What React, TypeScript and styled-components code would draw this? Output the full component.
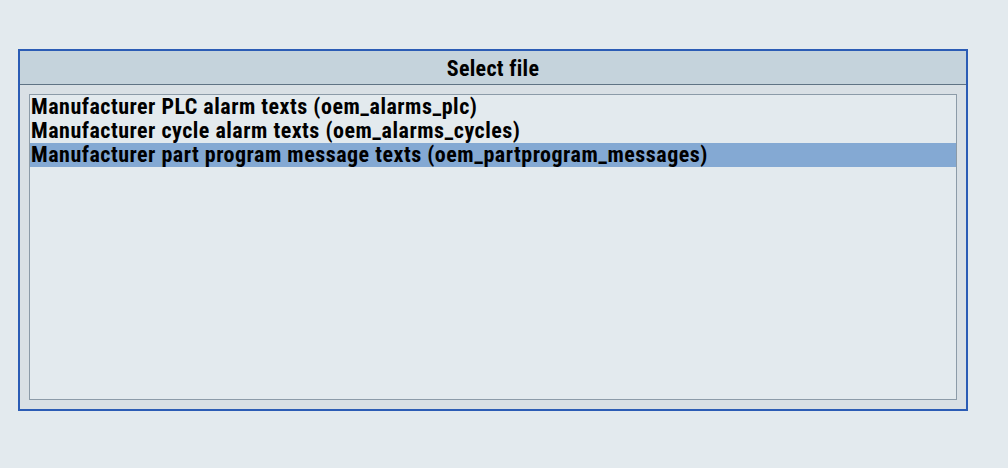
import React from "react";
import styled, { createGlobalStyle } from "styled-components";

const Global = createGlobalStyle`
  html, body {
    margin: 0;
    padding: 0;
    background: #e3eaee;
  }
  body {
    width: 1008px;
    height: 468px;
    overflow: hidden;
    font-family: Roboto, "Liberation Sans", Arial, sans-serif;
    font-stretch: 75%;
  }
`;

const Page = styled.div`
  padding: 49px 0 0 18px;
`;

const Dialog = styled.div`
  width: 950px;
  height: 362px;
  box-sizing: border-box;
  border: 2px solid #2b5cb5;
  display: flex;
  flex-direction: column;
  background: #d9e0e5;
`;

const Header = styled.div`
  height: 34px;
  box-sizing: border-box;
  padding-top: 2px;
  flex: none;
  background: #c5d3dc;
  border-bottom: 1px solid #5f7384;
  display: flex;
  align-items: center;
  justify-content: center;
  font-weight: 700;
  font-size: 22px;
  font-stretch: 75%;
  letter-spacing: 0.3px;
  color: #000;
`;

const Body = styled.div`
  flex: 1;
  padding: 9px;
  display: flex;
`;

const List = styled.div`
  flex: 1;
  background: #e3eaee;
  border: 1px solid #8c9ba8;
  display: flex;
  flex-direction: column;
`;

const Row = styled.div<{ $selected?: boolean }>`
  height: 24px;
  line-height: 24px;
  padding-left: 1px;
  background: ${(p) => (p.$selected ? "#84a9d3" : "transparent")};
  font-weight: 700;
  font-size: 22px;
  font-stretch: 75%;
  letter-spacing: 0.5px;
  color: #000;
  white-space: nowrap;
`;

const items = [
  "Manufacturer PLC alarm texts (oem_alarms_plc)",
  "Manufacturer cycle alarm texts (oem_alarms_cycles)",
  "Manufacturer part program message texts (oem_partprogram_messages)",
];

export default function App() {
  return (
    <>
      <Global />
      <Page>
        <Dialog>
          <Header>Select file</Header>
          <Body>
            <List>
              {items.map((t, i) => (
                <Row key={t} $selected={i === 2}>
                  {t}
                </Row>
              ))}
            </List>
          </Body>
        </Dialog>
      </Page>
    </>
  );
}
